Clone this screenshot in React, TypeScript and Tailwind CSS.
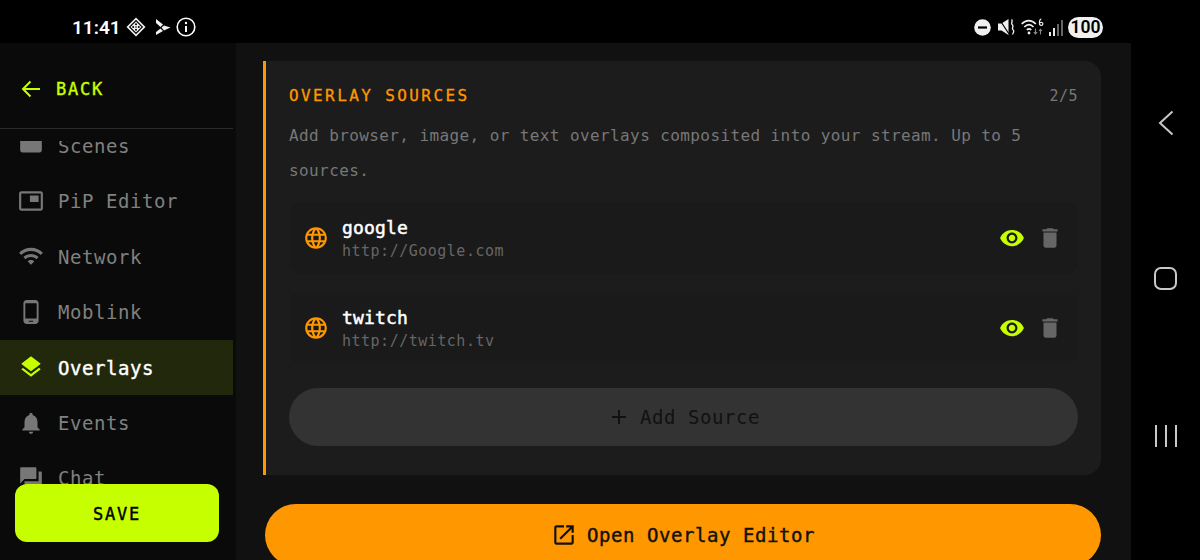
const MONO = 'font-["DejaVu_Sans_Mono","Liberation_Mono",monospace]';

// ── Icons ──────────────────────────────────────────────
const Icon = ({ d, className }: { d: string; className: string }) => (
  <svg className={className} viewBox="0 0 24 24" fill="currentColor">
    <path d={d} />
  </svg>
);

const paths = {
  scenes: 'M4 6h16c1.1 0 2 .9 2 2v8c0 1.1-.9 2-2 2H4c-1.1 0-2-.9-2-2V8c0-1.1.9-2 2-2z',
  pip: 'M19 7h-8v6h8V7zm2-4H3c-1.1 0-2 .9-2 2v14c0 1.1.9 1.98 2 1.98h18c1.1 0 2-.88 2-1.98V5c0-1.1-.9-2-2-2zm0 16.01H3V4.98h18v14.03z',
  wifi: 'M1 9l2 2c4.97-4.97 13.03-4.97 18 0l2-2C16.93 2.93 7.08 2.93 1 9zm8 8l3 3 3-3c-1.65-1.66-4.34-1.66-6 0zm-4-4l2 2c2.76-2.76 7.24-2.76 10 0l2-2C15.14 9.14 8.87 9.14 5 13z',
  phone: 'M16 1H8C6.34 1 5 2.34 5 4v16c0 1.66 1.34 3 3 3h8c1.66 0 3-1.34 3-3V4c0-1.66-1.34-3-3-3zm-2 20h-4v-1h4v1zm3.25-3H6.75V4h10.5v14z',
  layers: 'M11.99 18.54l-7.37-5.73L3 14.07l9 7 9-7-1.63-1.27-7.38 5.74zM12 16l7.36-5.73L21 9l-9-7-9 7 1.63 1.27L12 16z',
  bell: 'M12 22c1.1 0 2-.9 2-2h-4c0 1.1.89 2 2 2zm6-6v-5c0-3.07-1.64-5.64-4.5-6.32V4c0-.83-.67-1.5-1.5-1.5s-1.5.67-1.5 1.5v.68C7.63 5.36 6 7.92 6 11v5l-2 2v1h16v-1l-2-2z',
  chat: 'M21 6h-2v9H6v2c0 .55.45 1 1 1h11l4 4V7c0-.55-.45-1-1-1zm-4 6V3c0-.55-.45-1-1-1H3c-.55 0-1 .45-1 1v14l4-4h10c.55 0 1-.45 1-1z',
  globe: 'M11.99 2C6.47 2 2 6.48 2 12s4.47 10 9.99 10C17.52 22 22 17.52 22 12S17.52 2 11.99 2zm6.93 6h-2.95c-.32-1.25-.78-2.45-1.38-3.56 1.84.63 3.37 1.91 4.33 3.56zM12 4.04c.83 1.2 1.48 2.53 1.91 3.96h-3.82c.43-1.43 1.08-2.76 1.91-3.96zM4.26 14C4.1 13.36 4 12.69 4 12s.1-1.36.26-2h3.38c-.08.66-.14 1.32-.14 2 0 .68.06 1.34.14 2H4.26zm.82 2h2.95c.32 1.25.78 2.45 1.38 3.56-1.84-.63-3.37-1.9-4.33-3.56zm2.95-8H5.08c.96-1.66 2.49-2.93 4.33-3.56C8.81 5.55 8.35 6.75 8.03 8zM12 19.96c-.83-1.2-1.48-2.53-1.91-3.96h3.82c-.43 1.43-1.08 2.76-1.91 3.96zM14.34 14H9.66c-.09-.66-.16-1.32-.16-2 0-.68.07-1.35.16-2h4.68c.09.65.16 1.32.16 2 0 .68-.07 1.34-.16 2zm.25 5.56c.6-1.11 1.06-2.31 1.38-3.56h2.95c-.96 1.65-2.49 2.93-4.33 3.56zM16.36 14c.08-.66.14-1.32.14-2 0-.68-.06-1.34-.14-2h3.38c.16.64.26 1.31.26 2s-.1 1.36-.26 2h-3.38z',
  eye: 'M12 4.5C7 4.5 2.73 7.61 1 12c1.73 4.39 6 7.5 11 7.5s9.27-3.11 11-7.5c-1.73-4.39-6-7.5-11-7.5zM12 17c-2.76 0-5-2.24-5-5s2.24-5 5-5 5 2.24 5 5-2.24 5-5 5zm0-8c-1.66 0-3 1.34-3 3s1.34 3 3 3 3-1.34 3-3-1.34-3-3-3z',
  trash: 'M6 19c0 1.1.9 2 2 2h8c1.1 0 2-.9 2-2V7H6v12zM19 4h-3.5l-1-1h-5l-1 1H5v2h14V4z',
  open: 'M19 19H5V5h7V3H5c-1.11 0-2 .9-2 2v14c0 1.1.89 2 2 2h14c1.1 0 2-.9 2-2v-7h-2v7zM14 3v2h3.59l-9.83 9.83 1.41 1.41L19 6.41V10h2V3h-7z',
  add: 'M19 13h-6v6h-2v-6H5v-2h6V5h2v6h6v2z',
};

// ── Status bar ─────────────────────────────────────────
const StatusBar = () => (
  <div className="h-[43px] shrink-0 bg-black flex items-center justify-between pt-[11px] pl-[72px] pr-[97px] text-white">
    <div className="flex items-center">
      <span className='text-[19px] font-semibold font-["Roboto",sans-serif] leading-none w-[54px]'>11:41</span>
      <svg className="w-[20px] h-[20px]" viewBox="0 0 20 20">
        <path d="M10 .5 19.500 10 10 19.500 .5 10z" fill="#f2f2f2" />
        <path d="M10 2.800 17.200 10 10 17.200 2.800 10z" fill="#000" />
        <path d="M10 4.500 15.500 10 10 15.500 4.500 10z" fill="#f2f2f2" />
        <g fill="#000">
          <circle cx="10" cy="7.200" r="1" />
          <circle cx="7.200" cy="10" r="1" />
          <circle cx="12.800" cy="10" r="1" />
          <circle cx="10" cy="12.800" r="1" />
          <circle cx="10" cy="10" r=".8" />
        </g>
      </svg>
      <svg className="w-[16px] h-[18px] ml-[9px]" viewBox="0 0 16 18" fill="#f2f2f2">
        <path d="M1 1 8 6.500 5.500 9 1 5zM9 7.500 15.500 9.500 9 12.500 6.500 9.500zM5.500 10.500 8 13 1 17 1 14z" />
      </svg>
      <svg className="w-[20px] h-[20px] ml-[5px]" viewBox="0 0 20 20" fill="none" stroke="currentColor">
        <circle cx="10" cy="10" r="8.800" strokeWidth="1.600" />
        <path d="M10 9v6" strokeWidth="2" />
        <circle cx="10" cy="6" r="1.200" fill="currentColor" stroke="none" />
      </svg>
    </div>
    <div className="flex items-center">
      <svg className="w-[17px] h-[17px]" viewBox="0 0 17 17">
        <circle cx="8.500" cy="8.500" r="8.300" fill="#f0f0f0" />
        <rect x="4" y="7.400" width="9" height="2.200" fill="#000" />
      </svg>
      <svg className="w-[17px] h-[18px] ml-[7px]" viewBox="0 0 17 18" fill="#f0f0f0">
        <path d="M0 5.500h3.500L10.500 1v16L3.500 12.500H0z" />
        <path d="M1.500 1.500 11 16" stroke="#000" strokeWidth="1.200" />
        <path d="M13.500 1.500c2 1.800-1.200 3.300.8 5.200s-1.200 3.300.8 5.200-.8 3-.3 4.600" fill="none" stroke="#f0f0f0" strokeWidth="1.300" />
      </svg>
      <svg className="w-[23px] h-[18px] ml-[6px]" viewBox="0 0 23 18" fill="none" stroke="#f0f0f0">
        <path d="M.7 6C5 1.500 10.500 1.500 14.800 6M3.300 9C6.500 5.800 9.500 5.800 12.500 9M5.800 12c1.500-1.500 3-1.500 4.500 0" strokeWidth="1.700" />
        <circle cx="8" cy="15" r="1.400" fill="#f0f0f0" stroke="none" />
        <path d="M14.500 10.500v5.500M12.800 14.200l1.700 1.800 1.700-1.800M19.500 16.500v-5M18 13l1.500-1.700L21 13" stroke="#8a8a8a" strokeWidth="1.100" />
        <path d="M20.300 1c-2.200.3-2.500 5.500-.8 6.300 1.200.6 2.400-.3 2.400-1.500s-1.600-2-2.900-.9" strokeWidth="1.200" />
      </svg>
      <div className="flex items-end gap-[2px] h-[17px] ml-[5px]">
        <span className="w-[2px] h-[4px] bg-[#e8e8e8]" />
        <span className="w-[2px] h-[8px] bg-[#e8e8e8]" />
        <span className="w-[2px] h-[12px] bg-[#666]" />
        <span className="w-[2px] h-[16px] bg-[#666]" />
      </div>
      <div className='ml-[5px] w-[35px] h-[21px] rounded-full bg-[#f0f0f0] text-black text-[17.500px] font-semibold font-["Roboto",sans-serif] leading-[21px] text-center'>
        100
      </div>
    </div>
  </div>
);

// ── Sidebar ────────────────────────────────────────────
const navItems = [
  { label: 'Scenes', icon: paths.scenes },
  { label: 'PiP Editor', icon: paths.pip },
  { label: 'Network', icon: paths.wifi },
  { label: 'Moblink', icon: paths.phone },
  { label: 'Overlays', icon: paths.layers, active: true },
  { label: 'Events', icon: paths.bell },
  { label: 'Chat', icon: paths.chat },
];

const Sidebar = () => (
  <aside className="relative w-[236px] shrink-0 bg-[#0a0a0a] flex flex-col overflow-hidden">
    <div className={`h-[98px] shrink-0 w-[233px] ${MONO}`}>
      <div className="h-[86px] flex items-center pt-[6px] pl-[19px] border-b border-[#2a2a2a] text-[#c6ff00]">
        <svg className="w-[24px] h-[24px]" viewBox="0 0 24 24" fill="none" stroke="currentColor" strokeWidth="2">
          <path d="M21 12H4M11.500 4.500 4 12l7.500 7.500" />
        </svg>
        <span className="ml-[13px] pt-[2px] text-[17px] [-webkit-text-stroke:0.4px_currentColor] tracking-[1.800px]">BACK</span>
      </div>
    </div>
    <div className="flex-1 overflow-hidden">
      <div className="-mt-[23px] w-[233px]">
        {navItems.map((item) => (
          <div
            key={item.label}
            className={`h-[55.400px] flex items-center pl-[18px] ${MONO} text-[19px] tracking-[0.560px] ${
              item.active ? 'bg-[#22280b] text-white [-webkit-text-stroke:0.4px_currentColor]' : 'text-[#808080]'
            }`}
          >
            <Icon d={item.icon} className={`w-[26px] h-[26px] ${item.active ? 'text-[#c6ff00]' : 'text-[#777]'}`} />
            <span className="ml-[14px] pt-[1px]">{item.label}</span>
          </div>
        ))}
      </div>
    </div>
    <div className={`absolute left-[15px] top-[441px] w-[204px] h-[58px] pt-[3px] rounded-[12px] bg-[#c6ff00] text-black flex items-center justify-center ${MONO} text-[17px] [-webkit-text-stroke:0.4px_currentColor] tracking-[1.800px]`}>
      SAVE
    </div>
  </aside>
);

// ── Sources ────────────────────────────────────────────
const sources = [
  { name: 'google', url: 'http://Google.com' },
  { name: 'twitch', url: 'http://twitch.tv' },
];

const SourceRow = ({ name, url }: { name: string; url: string }) => (
  <div className="h-[72px] rounded-[12px] bg-[#1a1a1a] flex items-center pl-[14px] pr-[15px]">
    <Icon d={paths.globe} className="w-[26px] h-[26px] text-[#ff9800]" />
    <div className="ml-[13px] flex-1">
      <div className="text-[18px] [-webkit-text-stroke:0.5px_currentColor] leading-[24px] tracking-[0.160px] text-white">{name}</div>
      <div className="mt-[1px] text-[15px] tracking-[0.500px] leading-[20px] text-[#666]">{url}</div>
    </div>
    <Icon d={paths.eye} className="w-[26px] h-[26px] text-[#c6ff00]" />
    <Icon d={paths.trash} className="ml-[12px] w-[26px] h-[26px] text-[#666]" />
  </div>
);

const Main = () => (
  <main className={`flex-1 bg-[#111] pt-[18px] pl-[27px] pr-[30px] overflow-hidden ${MONO}`}>
    <section className="h-[414px] rounded-r-[16px] border-l-[3px] border-[#ff9800] bg-[#1c1c1c] pl-[23px] pr-[23px] pt-[23px]">
      <div className="flex justify-between items-center h-[24px]">
        <span className="text-[16px] [-webkit-text-stroke:0.3px_currentColor] tracking-[2.400px] text-[#ff9800]">OVERLAY SOURCES</span>
        <span className="text-[15px] tracking-[0.500px] text-[#777]">2/5</span>
      </div>
      <p className="mt-[10px] text-[16px] leading-[35px] tracking-[0.400px] text-[#777]">
        Add browser, image, or text overlays composited into your stream. Up to 5 sources.
      </p>
      <div className="mt-[14px] flex flex-col gap-[18px]">
        {sources.map((s) => (
          <SourceRow key={s.name} {...s} />
        ))}
      </div>
      <div className="mt-[24px] h-[58px] rounded-full bg-[#333] flex items-center justify-center text-[#111] text-[19px] tracking-[0.560px]">
        <Icon d={paths.add} className="w-[24px] h-[24px]" />
        <span className="ml-[9px] pt-[1px]">Add Source</span>
      </div>
    </section>
    <div className="mt-[29px] ml-[2px] h-[62px] rounded-full bg-[#ff9800] flex items-center justify-center text-[#111] text-[19px] [-webkit-text-stroke:0.4px_currentColor] tracking-[0.560px]">
      <Icon d={paths.open} className="w-[26px] h-[26px]" />
      <span className="ml-[10px]">Open Overlay Editor</span>
    </div>
  </main>
);

// ── Android nav buttons ────────────────────────────────
const SystemNav = () => (
  <div className="w-[69px] shrink-0 bg-black flex flex-col items-center text-[#c8c8c8]">
    <svg className="mt-[67px] w-[16px] h-[26px]" viewBox="0 0 16 26" fill="none" stroke="currentColor" strokeWidth="2">
      <path d="M14.500 1.500 2 13l12.500 11.500" />
    </svg>
    <div className="mt-[131px] w-[23px] h-[23px] rounded-[7px] border-2 border-[#c8c8c8]" />
    <div className="mt-[135px] flex gap-[8px]">
      <span className="w-[2px] h-[22px] bg-[#c8c8c8]" />
      <span className="w-[2px] h-[22px] bg-[#c8c8c8]" />
      <span className="w-[2px] h-[22px] bg-[#c8c8c8]" />
    </div>
  </div>
);

export default function App() {
  return (
    <div className="w-[1200px] h-[560px] bg-black flex flex-col overflow-hidden">
      <StatusBar />
      <div className="flex-1 flex min-h-0">
        <Sidebar />
        <Main />
        <SystemNav />
      </div>
    </div>
  );
}
